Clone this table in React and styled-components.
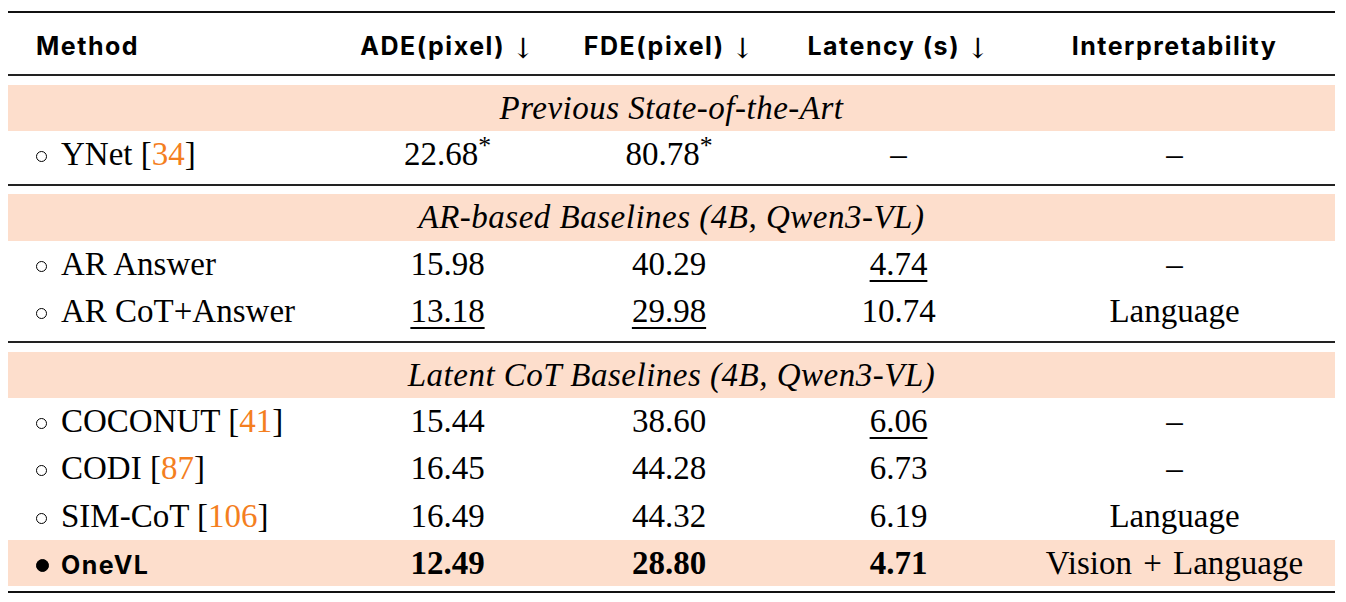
import React from 'react';
import styled, { createGlobalStyle } from 'styled-components';

const PINK = '#fddecc';
const ORANGE = '#f47f1f';
const COLS = '332px 215px 228px 231px 321px';

const Global = createGlobalStyle`
  html, body { margin: 0; padding: 0; background: #fff; }
  body { font-family: "Liberation Serif", serif; color: #000; }
`;

const Page = styled.div`
  padding: 11px 11px 8px 8px;
`;

const Table = styled.div`
  display: flex;
  flex-direction: column;
  width: 1327px;
`;

const Rule = styled.div`
  height: ${(p) => p.$h || 2}px;
  background: ${(p) => p.$c || '#111'};
  margin-top: ${(p) => p.$mt || 0}px;
  margin-bottom: ${(p) => p.$mb || 0}px;
`;

const Row = styled.div`
  display: grid;
  grid-template-columns: ${COLS};
  height: ${(p) => p.$h || 47}px;
  align-items: center;
  background: ${(p) => (p.$hl ? PINK : 'transparent')};
  font-family: "Liberation Serif", serif;
  font-size: 33px;
  line-height: 1;
`;

const HeadRow = styled(Row)`
  height: 61px;
  font-family: Inter, "Noto Sans", sans-serif;
  font-weight: 700;
  font-size: 25px;
  letter-spacing: 1.5px;
  padding-top: 6px;
  box-sizing: border-box;
`;

const Cell = styled.div`
  text-align: ${(p) => (p.$left ? 'left' : 'center')};
  padding-left: ${(p) => (p.$left ? 28 : 0)}px;
  white-space: nowrap;
  line-height: 1;
  font-weight: ${(p) => (p.$bold ? 700 : 'inherit')};
`;

const Section = styled.div`
  height: ${(p) => p.$h || 46}px;
  background: ${PINK};
  display: flex;
  align-items: center;
  justify-content: center;
  font-family: "Liberation Serif", serif;
  font-style: italic;
  font-size: 33px;
  line-height: 1;
  letter-spacing: 0.5px;
`;

const Arrow = styled.span`
  font-family: "DejaVu Serif", "Liberation Serif", serif;
  font-weight: 400;
  font-size: 28px;
  line-height: 0;
  letter-spacing: 0;
  margin-left: 6px;
  position: relative;
  top: 3px;
`;

const Bullet = styled.span`
  display: inline-block;
  width: ${(p) => (p.$filled ? 13 : 11)}px;
  height: ${(p) => (p.$filled ? 13 : 11)}px;
  border-radius: 50%;
  box-sizing: border-box;
  border: 1.6px solid #000;
  background: ${(p) => (p.$filled ? '#000' : 'transparent')};
  margin-right: ${(p) => (p.$filled ? 12 : 14)}px;
  vertical-align: ${(p) => (p.$filled ? '0.05em' : '0.08em')};
`;

const Cite = styled.span`
  color: ${ORANGE};
`;

const Sup = styled.sup`
  font-size: 0.78em;
  vertical-align: 0.42em;
  line-height: 0;
`;

const U = styled.span`
  text-decoration: underline;
  text-decoration-thickness: 1.5px;
  text-underline-offset: 5px;
`;

const SansBold = styled.span`
  font-family: Inter, "Noto Sans", sans-serif;
  font-weight: 700;
  font-size: 25px;
  letter-spacing: 1.5px;
`;

const Op = styled.span`
  margin: 0 3px;
`;

const Method = ({ name, cite }) => (
  <Cell $left>
    <Bullet />
    {name}
    {cite && (
      <>
        {' '}[<Cite>{cite}</Cite>]
      </>
    )}
  </Cell>
);

const DataRow = ({ name, cite, ade, fde, lat, interp, h }) => (
  <Row $h={h}>
    <Method name={name} cite={cite} />
    <Cell>{ade}</Cell>
    <Cell>{fde}</Cell>
    <Cell>{lat}</Cell>
    <Cell>{interp}</Cell>
  </Row>
);

const DASH = '–';

export default function App() {
  return (
    <>
      <Global />
      <Page>
        <Table>
          <Rule $h={2} />
          <HeadRow>
            <Cell $left>Method</Cell>
            <Cell>ADE(pixel)<Arrow>↓</Arrow></Cell>
            <Cell>FDE(pixel)<Arrow>↓</Arrow></Cell>
            <Cell>Latency (s)<Arrow>↓</Arrow></Cell>
            <Cell>Interpretability</Cell>
          </HeadRow>
          <Rule $h={2} $c="#222" $mb={9} />

          <Section>Previous State-of-the-Art</Section>
          <DataRow name="YNet" cite="34" ade={<>22.68<Sup>*</Sup></>} fde={<>80.78<Sup>*</Sup></>} lat={DASH} interp={DASH} />
          <Rule $h={2} $c="#222" $mt={6} $mb={8} />

          <Section $h={47}>AR-based Baselines (4B, Qwen3-VL)</Section>
          <DataRow name="AR Answer" ade="15.98" fde="40.29" lat={<U>4.74</U>} interp={DASH} />
          <DataRow name="AR CoT+Answer" ade={<U>13.18</U>} fde={<U>29.98</U>} lat="10.74" interp="Language" />
          <Rule $h={2} $c="#222" $mt={6} $mb={9} />

          <Section>Latent CoT Baselines (4B, Qwen3-VL)</Section>
          <DataRow name="COCONUT" cite="41" ade="15.44" fde="38.60" lat={<U>6.06</U>} interp={DASH} />
          <DataRow name="CODI" cite="87" ade="16.45" fde="44.28" lat="6.73" interp={DASH} />
          <DataRow name="SIM-CoT" cite="106" ade="16.49" fde="44.32" lat="6.19" interp="Language" h={48} />
          <Row $hl $h={46}>
            <Cell $left>
              <Bullet $filled />
              <SansBold>OneVL</SansBold>
            </Cell>
            <Cell $bold>12.49</Cell>
            <Cell $bold>28.80</Cell>
            <Cell $bold>4.71</Cell>
            <Cell>Vision <Op>+</Op> Language</Cell>
          </Row>
          <Rule $h={2} $mt={5} />
        </Table>
      </Page>
    </>
  );
}
